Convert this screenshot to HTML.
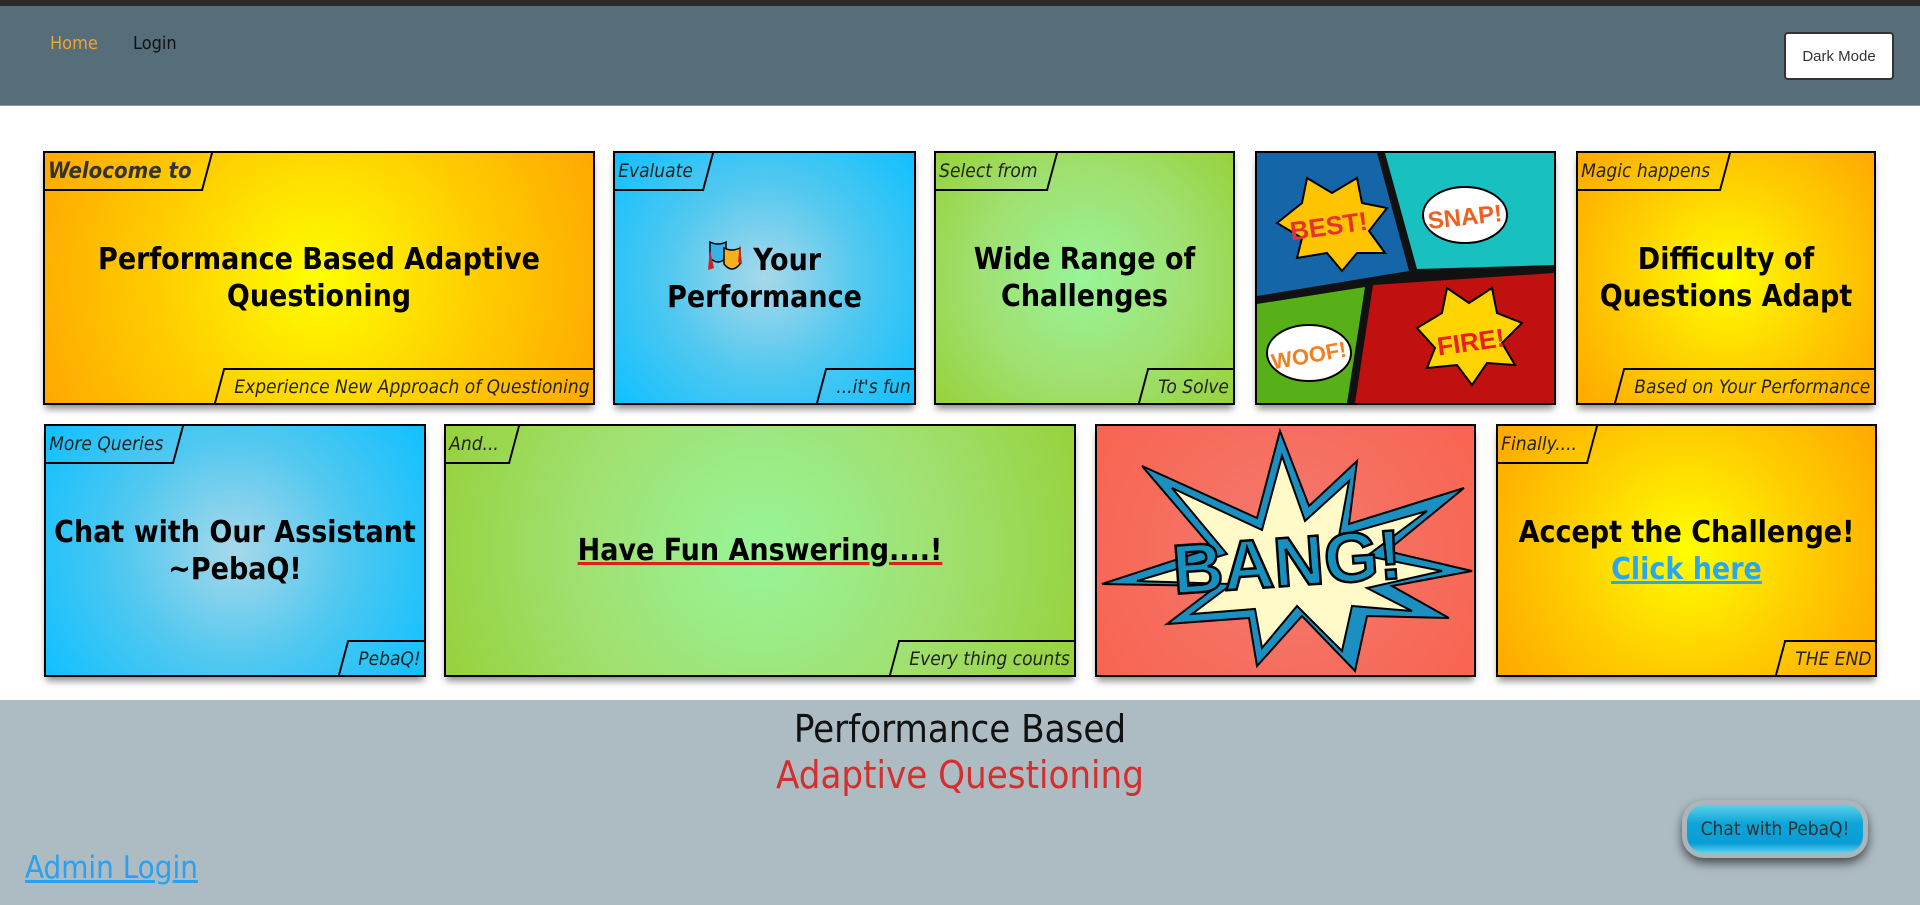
<!DOCTYPE html>
<html><head><meta charset="utf-8"><style>
*{box-sizing:border-box;margin:0;padding:0}
body{width:1920px;height:905px;overflow:hidden;background:#fff;font-family:"DejaVu Sans","Liberation Sans",sans-serif;position:relative}
.top{position:absolute;left:0;top:0;width:1920px;height:6px;background:#2a2a2a}
.nav{position:absolute;left:0;top:6px;width:1920px;height:100px;background:#566e7a;border-bottom:1px solid #8a9aa2}
.nav a{position:absolute;top:27px;font-size:18px;text-decoration:none;font-family:"DejaVu Sans Condensed","DejaVu Sans",sans-serif}
.dm{position:absolute;left:1784px;top:26px;width:110px;height:48px;background:#fff;border:2px solid #333;border-radius:4px;font:15px "Liberation Sans",sans-serif;color:#333;display:flex;align-items:center;justify-content:center}
.card{position:absolute;border:2px solid #000;box-shadow:0 6px 7px -2px rgba(0,0,0,.45);overflow:hidden;display:flex;align-items:center;justify-content:center;text-align:center}
.y{background:radial-gradient(circle,#ffff00 0%,#ffd000 50%,#ffa800 100%)}
.b{background:radial-gradient(circle,#a8d8ea 0%,#50c8f0 50%,#10c0ff 100%)}
.g{background:radial-gradient(circle,#98f598 0%,#a0e070 55%,#96d23c 100%)}
.t{font-weight:bold;font-size:30px;line-height:37px;color:#000;font-family:"DejaVu Sans Condensed","DejaVu Sans",sans-serif}
.lt{position:absolute;left:-10px;top:0;height:38px;padding:0 14px 0 18px;transform:skewX(-15deg);transform-origin:top left;border-right:2px solid #000;border-bottom:2px solid #000;display:flex;align-items:center}
.lb{position:absolute;right:-10px;bottom:0;height:35px;padding:0 18px 0 14px;transform:skewX(-15deg);transform-origin:bottom left;border-left:2px solid #000;border-top:2px solid #000;display:flex;align-items:center}
.lt span,.lb span{transform:skewX(15deg);font-style:italic;font-size:19px;color:#222;white-space:nowrap;font-family:"DejaVu Sans Condensed","DejaVu Sans",sans-serif}
.foot{position:absolute;left:0;top:700px;width:1920px;height:205px;background:#adbcc3}
</style></head><body>
<div class="top"></div>
<div class="nav">
<a style="left:50px;color:#f5a030">Home</a>
<a style="left:133px;color:#111">Login</a>
<div class="dm">Dark Mode</div>
</div>

<div class="card y" style="left:43px;top:151px;width:552px;height:254px">
<div class="lt"><span style="font-weight:bold;font-size:22px;color:#333">Welocome to</span></div>
<div class="t">Performance Based Adaptive<br>Questioning</div>
<div class="lb"><span>Experience New Approach of Questioning</span></div>
</div>

<div class="card b" style="left:613px;top:151px;width:303px;height:254px">
<div class="lt"><span>Evaluate</span></div>
<div class="t"><svg width="36" height="34" viewBox="0 0 36 34" style="vertical-align:-4px"><path d="M2 2 Q10 6 18 2 L18 18 Q10 26 2 18Z" fill="#3ab0e8" stroke="#000" stroke-width="1.5"/><path d="M2 10 L0 30 L6 28 Z" fill="#d02020"/><path d="M16 8 Q24 12 32 8 L32 24 Q24 34 16 24Z" fill="#f5b020" stroke="#000" stroke-width="1.5"/><path d="M32 4 L34 24 L30 22Z" fill="#d02020"/></svg> Your<br>Performance</div>
<div class="lb"><span>...it's fun</span></div>
</div>

<div class="card g" style="left:934px;top:151px;width:301px;height:254px">
<div class="lt"><span>Select from</span></div>
<div class="t">Wide Range of<br>Challenges</div>
<div class="lb"><span>To Solve</span></div>
</div>

<div class="card" style="left:1255px;top:151px;width:301px;height:254px;background:#111">
<svg width="297" height="250" viewBox="0 0 297 250">
<polygon points="0,0 120,0 152,118 0,143" fill="#1566a8"/>
<polygon points="128,0 297,0 297,112 160,116" fill="#18c0c0"/>
<polygon points="0,151 108,134 90,250 0,250" fill="#58b018"/>
<polygon points="116,132 297,120 297,250 98,250" fill="#c01010"/>
<polygon points="20,70 45,50 50,25 75,40 100,25 105,50 130,55 112,78 128,100 100,100 85,118 70,100 40,105 45,85" fill="#ffc400" stroke="#000" stroke-width="2"/>
<text x="72" y="82" font-family="Liberation Sans" font-weight="bold" font-size="26" fill="#e83030" text-anchor="middle" transform="rotate(-8 72 75)">BEST!</text>
<ellipse cx="208" cy="62" rx="42" ry="28" fill="#fff" stroke="#000" stroke-width="2"/>
<text x="208" y="72" font-family="Liberation Sans" font-weight="bold" font-size="24" fill="#f06020" text-anchor="middle" transform="rotate(-6 208 65)">SNAP!</text>
<ellipse cx="52" cy="200" rx="42" ry="28" fill="#fff" stroke="#000" stroke-width="2"/>
<text x="52" y="210" font-family="Liberation Sans" font-weight="bold" font-size="22" fill="#f08020" text-anchor="middle" transform="rotate(-10 52 203)">WOOF!</text>
<polygon points="160,175 185,160 190,135 212,150 235,135 240,160 265,170 245,190 258,212 230,210 215,232 200,212 170,215 178,195" fill="#ffd400" stroke="#000" stroke-width="2"/>
<text x="214" y="198" font-family="Liberation Sans" font-weight="bold" font-size="26" fill="#e82020" text-anchor="middle" transform="rotate(-8 214 190)">FIRE!</text>
</svg>
</div>

<div class="card y" style="left:1576px;top:151px;width:300px;height:254px">
<div class="lt"><span>Magic happens</span></div>
<div class="t">Difficulty of<br>Questions Adapt</div>
<div class="lb"><span>Based on Your Performance</span></div>
</div>

<div class="card b" style="left:44px;top:424px;width:382px;height:253px">
<div class="lt"><span>More Queries</span></div>
<div class="t">Chat with Our Assistant<br>~PebaQ!</div>
<div class="lb"><span>PebaQ!</span></div>
</div>

<div class="card g" style="left:444px;top:424px;width:632px;height:253px">
<div class="lt"><span>And...</span></div>
<div class="t" style="text-decoration:underline;text-decoration-color:#e02020;text-decoration-thickness:3px">Have Fun Answering....!</div>
<div class="lb"><span>Every thing counts</span></div>
</div>

<div class="card" style="left:1095px;top:424px;width:381px;height:253px;background:radial-gradient(circle,#f47a70,#f86450)">
<svg width="377" height="249" viewBox="0 0 377 249">
<polygon points="5,158 115,122 45,40 160,92 183,5 212,80 260,35 252,98 367,62 290,125 375,145 295,160 352,192 270,190 258,245 205,190 160,240 152,192 70,198 120,160" fill="#1b8fc0" stroke="#000" stroke-width="2"/>
<polygon points="40,155 130,128 75,62 165,104 185,30 208,95 252,55 242,110 330,85 270,130 345,145 270,162 315,185 255,180 245,225 200,180 165,222 158,183 95,188 135,158" fill="#fffac8" stroke="#000" stroke-width="2"/>
<text x="190" y="160" font-family="Liberation Sans" font-weight="bold" font-size="70" fill="#1591c0" stroke="#000" stroke-width="2.5" text-anchor="middle" transform="rotate(-4 190 135)">BANG!</text>
</svg>
</div>

<div class="card y" style="left:1496px;top:424px;width:381px;height:253px">
<div class="lt"><span>Finally....</span></div>
<div class="t">Accept the Challenge!<br><span style="color:#28a8f0;text-decoration:underline">Click here</span></div>
<div class="lb"><span>THE END</span></div>
</div>

<div class="foot">
<div style="position:absolute;left:0;width:1920px;top:6px;text-align:center;font-size:38px;line-height:46px;font-family:'DejaVu Sans Condensed','DejaVu Sans',sans-serif;color:#111">Performance Based<br><span style="color:#d32f2f">Adaptive Questioning</span></div>
<div style="position:absolute;left:25px;top:150px;font-size:31px;color:#2aa0f0;text-decoration:underline;font-family:'DejaVu Sans Condensed','DejaVu Sans',sans-serif">Admin Login</div>
<div style="position:absolute;left:1682px;top:100px;width:186px;height:58px;border-radius:22px;background:#aab6bc;padding:5px;box-shadow:0 5px 10px rgba(0,0,0,.6)">
<div style="width:100%;height:100%;border-radius:17px;background:linear-gradient(#5ad0e8,#0aa4d8 40%,#0a9ed6 80%,#60d0f0);display:flex;align-items:center;justify-content:center;font-size:19px;color:#333;font-family:'DejaVu Sans Condensed','DejaVu Sans',sans-serif">Chat with PebaQ!</div>
</div>
</div>
</body></html>
